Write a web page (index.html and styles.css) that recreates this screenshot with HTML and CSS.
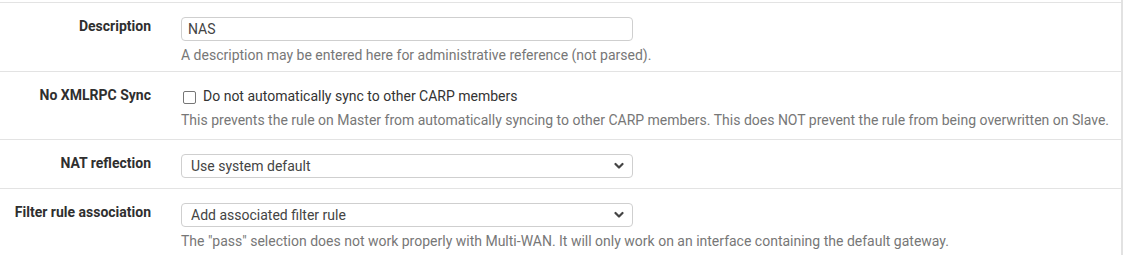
FILE: index.html
```html
<!DOCTYPE html>
<html lang="en">
<head>
<meta charset="utf-8">
<title>NAT rule</title>
<link rel="stylesheet" href="styles.css">
</head>
<body>
<div class="panel">
  <div class="form-row">
    <div class="label">Description</div>
    <div class="field">
      <input class="text-input" type="text" value="NAS">
      <div class="help">A description may be entered here for administrative reference (not parsed).</div>
    </div>
  </div>
  <div class="form-row form-row-check">
    <div class="label">No XMLRPC Sync</div>
    <div class="field">
      <label class="check-line"><input class="check" type="checkbox"><span>Do not automatically sync to other CARP members</span></label>
      <div class="help">This prevents the rule on Master from automatically syncing to other CARP members. This does NOT prevent the rule from being overwritten on Slave.</div>
    </div>
  </div>
  <div class="form-row">
    <div class="label">NAT reflection</div>
    <div class="field">
      <div class="select-wrap">
        <select class="select"><option>Use system default</option></select>
        <svg class="chev" width="10" height="8" viewBox="0 0 10 8"><path d="M1.5 2 L5 5.5 L8.5 2" fill="none" stroke="#444" stroke-width="2.2" stroke-linecap="round" stroke-linejoin="round"/></svg>
      </div>
    </div>
  </div>
  <div class="form-row">
    <div class="label">Filter rule association</div>
    <div class="field">
      <div class="select-wrap">
        <select class="select"><option>Add associated filter rule</option></select>
        <svg class="chev" width="10" height="8" viewBox="0 0 10 8"><path d="M1.5 2 L5 5.5 L8.5 2" fill="none" stroke="#444" stroke-width="2.2" stroke-linecap="round" stroke-linejoin="round"/></svg>
      </div>
      <div class="help">The "pass" selection does not work properly with Multi-WAN. It will only work on an interface containing the default gateway.</div>
    </div>
  </div>
</div>
</body>
</html>
```

FILE: styles.css
```css
html, body {
  margin: 0;
  padding: 0;
  background: #fff;
}
body {
  font-family: Roboto, "Noto Sans", "Liberation Sans", sans-serif;
  font-size: 14px;
  color: #333;
}
.panel {
  width: 1121px;
  height: 255px;
  padding-top: 2px;
  border-right: 2px solid #e2e2e2;
  box-sizing: content-box;
}
.form-row {
  display: flex;
  gap: 30px;
  border-top: 1px solid #e3e3e3;
  padding: 14px 0 6px;
}
.form-row-check {
  padding-bottom: 9px;
}
.label {
  flex: 0 0 151px;
  text-align: right;
  font-weight: 700;
  font-size: 14px;
  line-height: 18px;
  color: #2f2f2f;
}
.field {
  flex: 1;
  display: flex;
  flex-direction: column;
  align-items: flex-start;
}
.text-input {
  box-sizing: border-box;
  width: 452px;
  height: 24px;
  margin: 0 0 4px;
  padding: 0 6px;
  border: 1px solid #cfcfcf;
  border-radius: 4px;
  font-family: inherit;
  font-size: 14px;
  color: #444;
  outline: none;
}
.help {
  line-height: 20px;
  color: #777;
  font-size: 14px;
}
.check-line {
  display: flex;
  align-items: center;
  gap: 7px;
  height: 20px;
  margin-bottom: 4px;
  padding-left: 2px;
  color: #333;
}
.check {
  appearance: none;
  -webkit-appearance: none;
  box-sizing: border-box;
  width: 13px;
  height: 13px;
  margin: 2px 0 0;
  border: 1px solid #767676;
  border-radius: 2px;
  background: #fff;
}
.select-wrap {
  position: relative;
  width: 452px;
  height: 24px;
  margin-bottom: 4px;
}
.select {
  appearance: none;
  -webkit-appearance: none;
  box-sizing: border-box;
  width: 100%;
  height: 24px;
  margin: 0;
  padding: 0 9px;
  border: 1px solid #cfcfcf;
  border-radius: 4px;
  background: #fff;
  font-family: inherit;
  font-size: 14px;
  color: #444;
}
.chev {
  position: absolute;
  right: 9px;
  top: 8px;
}
```
